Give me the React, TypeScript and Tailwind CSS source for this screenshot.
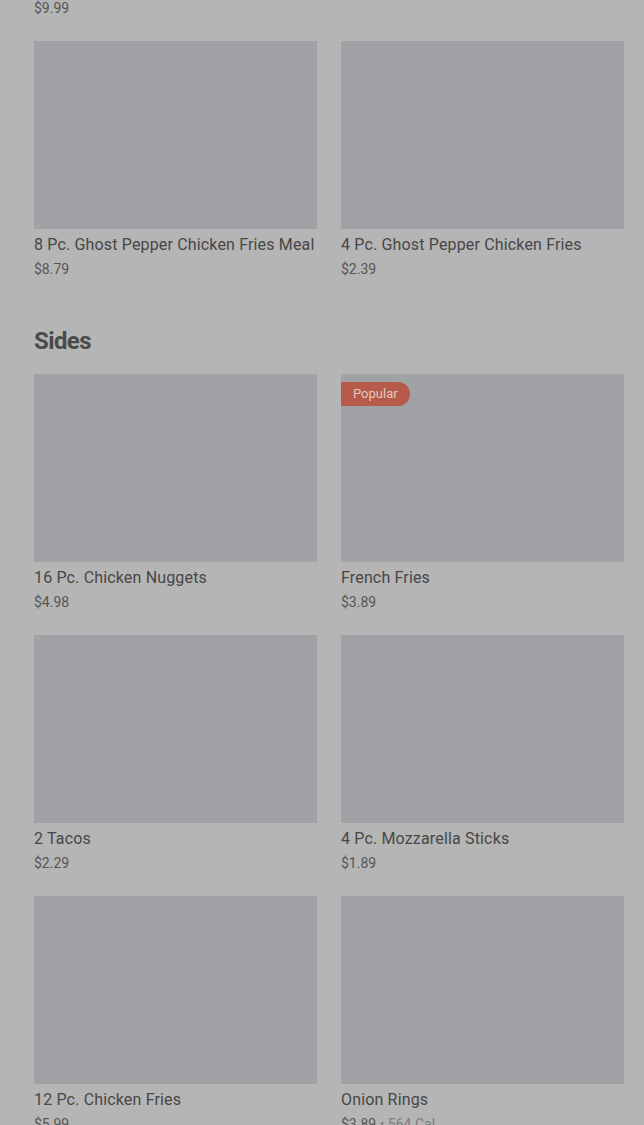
import React from 'react';

type Item = { name: string; price: string; cal?: string; popular?: boolean };

const topItems: Item[] = [
  { name: '8 Pc. Ghost Pepper Chicken Fries Meal', price: '$8.79' },
  { name: '4 Pc. Ghost Pepper Chicken Fries', price: '$2.39' },
];

const sides: Item[] = [
  { name: '16 Pc. Chicken Nuggets', price: '$4.98' },
  { name: 'French Fries', price: '$3.89', popular: true },
  { name: '2 Tacos', price: '$2.29' },
  { name: '4 Pc. Mozzarella Sticks', price: '$1.89' },
  { name: '12 Pc. Chicken Fries', price: '$5.99' },
  { name: 'Onion Rings', price: '$3.89', cal: '564 Cal' },
];

function Card({ item }: { item: Item }) {
  return (
    <div className="flex flex-col">
      <div className="relative h-[188px] w-full bg-[#a0a2a5]">
        {item.popular && (
          <span className="absolute left-0 top-2 rounded-r-full bg-[#b65a4b] py-0.5 pl-3 pr-3 text-[13px] leading-5 text-[#e3c9c3]">
            Popular
          </span>
        )}
      </div>
      <p className="mt-[6px] whitespace-nowrap text-[16px] leading-5 font-normal tracking-[0.01em] text-[#474747]">{item.name}</p>
      <p className="mt-[4px] text-[14px] leading-5 text-[#555555]">
        {item.price}
        {item.cal && (
          <span className="text-[#7c7c7c]"> • {item.cal}</span>
        )}
      </p>
    </div>
  );
}

export default function App() {
  return (
    <div className="min-h-screen overflow-hidden bg-[#b5b5b5] pl-[34px] pr-[20px] font-['Roboto',sans-serif]">
      <p className="-mt-0.5 text-[14px] leading-5 text-[#555555]">$9.99</p>

      <div className="mt-[23px] grid grid-cols-2 gap-x-6 gap-y-[23px]">
        {topItems.map((item) => (
          <Card key={item.name} item={item} />
        ))}
      </div>

      <section className="mt-[48px]">
        <h2 className="text-[24px] leading-7 font-bold tracking-tight text-[#4a4a4a]">Sides</h2>
        <div className="mt-[19px] grid grid-cols-2 gap-x-6 gap-y-[23px]">
          {sides.map((item) => (
            <Card key={item.name} item={item} />
          ))}
        </div>
      </section>
    </div>
  );
}
